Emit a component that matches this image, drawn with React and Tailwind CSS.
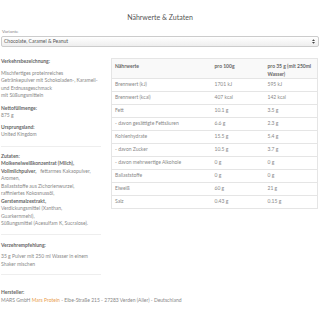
import React from "react";

const rows = [
  ["Brennwert (kJ)", "1701 kJ", "595 kJ"],
  ["Brennwert (kcal)", "407 kcal", "142 kcal"],
  ["Fett", "10.1 g", "3.5 g"],
  ["- davon gesättigte Fettsäuren", "6.6 g", "2.3 g"],
  ["Kohlenhydrate", "15.5 g", "5.4 g"],
  ["- davon Zucker", "10.5 g", "3.7 g"],
  ["- davon mehrwertige Alkohole", "0 g", "0 g"],
  ["Ballaststoffe", "0 g", "0 g"],
  ["Eiweiß", "60 g", "21 g"],
  ["Salz", "0.43 g", "0.15 g"],
];

export default function App() {
  return (
    <div
      className="w-[320px] h-[320px] bg-white overflow-hidden text-[#888] text-[5px] leading-[7.5px]"
      style={{ fontFamily: "Lato, 'Open Sans', sans-serif" }}
    >
      <h2 className="text-center text-[7px] leading-[8px] text-[#555] pt-[13px]">Nährwerte &amp; Zutaten</h2>

      <div className="px-[1px] mt-[8px]">
        <div className="pl-[1px] text-[4.5px] leading-[6px]">Variante</div>
        <div className="mt-[1px] h-[11px] border border-[#ccc] rounded-[2px] bg-gradient-to-b from-white to-[#eee] flex items-center justify-between px-[2px] text-[#555]">
          <span>Chocolate, Caramel &amp; Peanut</span>
          <svg width="3" height="5" viewBox="0 0 3 5" className="mr-[1px]">
            <path d="M0 2 L1.5 0.3 L3 2 Z M0 3 L1.5 4.7 L3 3 Z" fill="#444" />
          </svg>
        </div>
      </div>

      <div className="flex mt-[11px] pl-[1px] pr-[2px]">
        <div className="w-[104px] shrink-0 whitespace-nowrap">
          <div className="font-bold text-[#666]">Verkehrsbezeichnung:</div>
          <div className="mt-[4px]">
            Mischfertiges proteinreiches
            <br />
            Getränkepulver mit Schokoladen-, Karamell-
            <br />
            und Erdnussgeschmack
            <br />
            mit Süßungsmitteln
          </div>
          <div className="font-bold text-[#666] mt-[5px]">Nettofüllmenge:</div>
          <div>875 g</div>
          <div className="font-bold text-[#666] mt-[4px]">Ursprungsland:</div>
          <div>United Kingdom</div>
          <div className="border-t border-[#eee] w-[100px] mt-[7px] mb-[6px]" />
          <div className="font-bold text-[#666]">Zutaten:</div>
          <div>
            <b className="text-[#666]">Molkeneiweißkonzentrat (Milch),</b>
            <br />
            <b className="text-[#666]">Vollmilchpulver,</b>&nbsp;&nbsp; fettarmes Kakaopulver,
            <br />
            Aromen,
            <br />
            Ballaststoffe aus Zichorienwurzel,
            <br />
            raffiniertes Kokosnussöl,
            <br />
            <b className="text-[#666]">Gerstenmalzextrakt,</b>
            <br />
            Verdickungsmittel (Xanthan,
            <br />
            Guarkernmehl),
            <br />
            Süßungsmittel (Acesulfam K, Sucralose).
          </div>
          <div className="border-t border-[#eee] w-[100px] mt-[6px] mb-[7px]" />
          <div className="font-bold text-[#666]">Verzehrempfehlung:</div>
          <div className="mt-[4px]">
            35 g Pulver mit 250 ml Wasser in einem
            <br />
            Shaker mischen
          </div>
          <div className="border-t border-[#eee] w-[100px] mt-[6px]" />
        </div>

        <div className="flex-1 ml-[6px]">
          <table className="w-full border border-[#e5e5e5] border-collapse">
            <thead>
              <tr className="bg-[#f9f9f9] text-[#666] font-bold text-left align-top">
                <th className="pl-[3px] pt-[4px] pb-[6px] font-bold">Nährwerte</th>
                <th className="w-[53px] pt-[4px] font-bold">pro 100g</th>
                <th className="w-[50px] pt-[4px] font-bold">
                  pro 35 g (mit 250ml
                  <br />
                  Wasser)
                </th>
              </tr>
            </thead>
            <tbody>
              {rows.map((r) => (
                <tr key={r[0]} className="border-t border-[#e5e5e5] h-[13px]">
                  <td className="pl-[3px]">{r[0]}</td>
                  <td>{r[1]}</td>
                  <td>{r[2]}</td>
                </tr>
              ))}
            </tbody>
          </table>
        </div>
      </div>

      <div className="px-[1px] mt-[14px]">
        <div className="font-bold text-[#666]">Hersteller:</div>
        <div>
          MARS GmbH <span className="text-[#e9a04f]">Mars Protein</span> - Elbe-Straße 215 - 27283 Verden (Aller) - Deutschland
        </div>
      </div>
    </div>
  );
}
